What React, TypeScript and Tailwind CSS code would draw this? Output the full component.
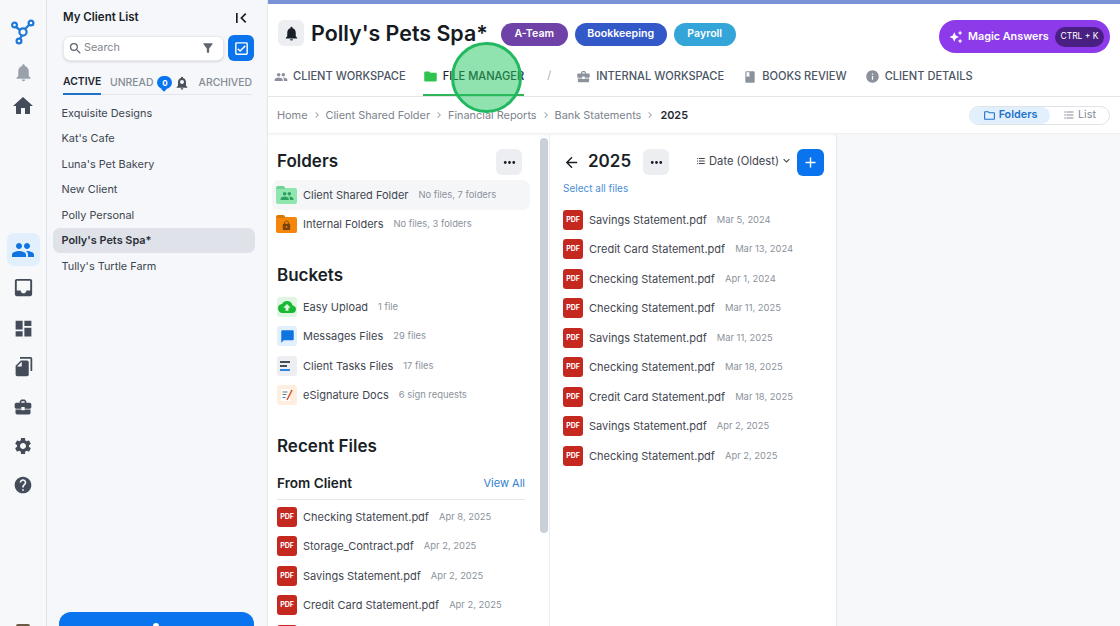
import React from 'react'
import {
  MdPeople,
  MdInbox,
  MdDashboard,
  MdFileCopy,
  MdBusinessCenter,
  MdSettings,
  MdHelp,
  MdHome,
  MdNotifications,
  MdFolder,
  MdBook,
  MdInfo,
  MdCloudUpload,
  MdLock,
  MdChatBubble,
  MdMoreHoriz,
  MdArrowBack,
  MdAdd,
  MdOutlineCheckBox,
  MdOutlineFolder,
  MdFormatListBulleted,
  MdAutoAwesome,
  MdKeyboardArrowDown,
  MdChevronRight,
  MdSearch,
  MdFilterAlt,
  MdFirstPage,
} from 'react-icons/md'

const clients = ['Exquisite Designs', "Kat's Cafe", "Luna's Pet Bakery", 'New Client', 'Polly Personal', "Polly's Pets Spa*", "Tully's Turtle Farm"]

const crumbs = ['Home', 'Client Shared Folder', 'Financial Reports', 'Bank Statements']

const recentFiles = [
  { name: 'Checking Statement.pdf', date: 'Apr 8, 2025' },
  { name: 'Storage_Contract.pdf', date: 'Apr 2, 2025' },
  { name: 'Savings Statement.pdf', date: 'Apr 2, 2025' },
  { name: 'Credit Card Statement.pdf', date: 'Apr 2, 2025' },
]

const folderFiles = [
  { name: 'Savings Statement.pdf', date: 'Mar 5, 2024' },
  { name: 'Credit Card Statement.pdf', date: 'Mar 13, 2024' },
  { name: 'Checking Statement.pdf', date: 'Apr 1, 2024' },
  { name: 'Checking Statement.pdf', date: 'Mar 11, 2025' },
  { name: 'Savings Statement.pdf', date: 'Mar 11, 2025' },
  { name: 'Checking Statement.pdf', date: 'Mar 18, 2025' },
  { name: 'Credit Card Statement.pdf', date: 'Mar 18, 2025' },
  { name: 'Savings Statement.pdf', date: 'Apr 2, 2025' },
  { name: 'Checking Statement.pdf', date: 'Apr 2, 2025' },
]

const Row = ({ icon, name, meta }: { icon: React.ReactNode; name: string; meta: string }) => (
  <div className="flex h-[29.5px] items-center gap-[6px] whitespace-nowrap">
    {icon}
    <span className="text-[11px] text-[#3f4650]">{name}</span>
    <span className="ml-[4px] text-[9.4px] text-[#8b929b]">{meta}</span>
  </div>
)

const PdfIcon = () => (
  <div className="flex h-[20px] w-[20px] shrink-0 items-center justify-center rounded-[3px] bg-[#c5281f] text-[7px] font-bold text-white">
    PDF
  </div>
)

const FolderIcon = ({ body, tab, children }: { body: string; tab: string; children: React.ReactNode }) => (
  <div className={`relative mt-[2px] flex h-[16px] w-[21px] items-center justify-center rounded-[2px] ${body}`}>
    <div className={`absolute -top-[2px] left-0 h-[3px] w-[9px] rounded-t-[2px] ${tab}`} />
    {children}
  </div>
)

const Tab = ({ icon, label, active }: { icon: React.ReactNode; label: string; active?: boolean }) => (
  <div className={`flex h-[41px] items-center gap-[5px] whitespace-nowrap border-b-2 pt-[4px] text-[11.1px] font-medium ${active ? 'border-[#2fb457] text-[#1f2730]' : 'border-transparent text-[#4b5563]'}`}>
    {icon}
    <span>{label}</span>
  </div>
)

export default function App() {
  return (
    <div className="flex h-[626px] w-[1120px] overflow-hidden bg-white font-['Inter',sans-serif]">
      {/* Icon rail */}
      <div className="relative flex w-[47px] shrink-0 flex-col items-center border-r border-[#dfe3ee] bg-[#f6f8fa]">
        <svg className="mt-[19px]" width="24" height="26" viewBox="0 0 24 26" fill="none" stroke="#1f78d8" strokeWidth="2.2">
          <circle cx="3.5" cy="6" r="2.4" />
          <circle cx="20" cy="4" r="2.4" />
          <circle cx="8" cy="22" r="2.4" />
          <circle cx="12" cy="13" r="3.6" />
          <path d="M5 8l4 3M18 6l-4 4M11 16l-2 4" />
        </svg>
        <MdNotifications className="mt-[17px] text-[#9aa1ab]" size={21} />
        <MdHome className="mt-[11px] text-[#444c59]" size={24} />
        <div className="mt-[115px] flex h-[33px] w-[33px] items-center justify-center rounded-[7px] bg-[#e2f0fd]">
          <MdPeople className="text-[#0f74e0]" size={24} />
        </div>
        <MdInbox className="mt-[10px] text-[#444c59]" size={23} />
        <MdDashboard className="mt-[19px] text-[#444c59]" size={21} />
        <MdFileCopy className="mt-[17px] -scale-x-100 text-[#444c59]" size={21} />
        <MdBusinessCenter className="mt-[20px] text-[#444c59]" size={20} />
        <MdSettings className="mt-[19px] text-[#444c59]" size={20} />
        <MdHelp className="mt-[19px] text-[#444c59]" size={20} />
        <div className="mt-auto h-[2px] w-[14px] rounded-t-full bg-[#6b5a44]" />
      </div>

      {/* Client list */}
      <div className="relative flex w-[221px] shrink-0 flex-col border-r border-[#e6e8ec] bg-[#f5f7fa]">
        <div className="flex items-center justify-between pl-[16px] pr-[20px] pt-[8px]">
          <span className="text-[11.5px] font-semibold text-[#1a1f27]">My Client List</span>
          <MdFirstPage className="translate-x-[4px] text-[#1a1f27]" size={20} />
        </div>
        <div className="mt-[7px] flex items-center gap-[4px] pl-[16px]">
          <div className="flex h-[25px] w-[161px] items-center rounded-[7px] border border-[#e7e9ed] bg-white pl-[4px] pr-[8px] shadow-sm">
            <MdSearch className="text-[#5f6670]" size={15} />
            <span className="ml-[1px] flex-1 pt-[1px] text-[10.8px] text-[#7f868f]">Search</span>
            <MdFilterAlt className="text-[#5f6670]" size={14} />
          </div>
          <div className="flex h-[26px] w-[26px] items-center justify-center rounded-[6px] bg-[#0a74ee]">
            <MdOutlineCheckBox className="text-white" size={17} />
          </div>
        </div>
        <div className="ml-[16px] mr-[15px] mt-[10px] flex h-[24px] items-center border-b border-[#e3e6ea] text-[10.4px] font-medium text-[#858c96]">
          <span className="-mb-[1px] flex h-[24px] w-[38px] items-center border-b-2 border-[#1f72c9] font-semibold text-[#1f2730]">ACTIVE</span>
          <span className="ml-[9px]">UNREAD</span>
          <span className="relative ml-[4px] flex h-[13px] w-[15px] items-center justify-center rounded-full bg-[#0a74ee] text-[8px] font-bold text-white">
            0
            <span className="absolute -bottom-[2px] left-[5px] h-[4px] w-[4px] rotate-45 bg-[#0a74ee]" />
          </span>
          <span className="relative ml-[2px] flex">
            <MdNotifications className="text-[#4a505a]" size={16} />
            <span className="absolute left-[6px] top-[5px] h-[4px] w-[4px] rounded-full bg-[#f5f7fa]" />
          </span>
          <span className="ml-auto">ARCHIVED</span>
        </div>
        <div className="mt-[5px] flex flex-col pl-[6px] pr-[12px]">
          {clients.map((c) => (
            <div
              key={c}
              className={`flex h-[25.5px] items-center rounded-[7px] pl-[8.5px] text-[10.9px] ${c === "Polly's Pets Spa*" ? 'bg-[#dfe2e8] font-semibold text-[#2a3039]' : 'text-[#3f4650]'}`}
            >
              {c}
            </div>
          ))}
        </div>
        <div className="ml-[12px] mr-[13px] mt-auto h-[14px] rounded-t-[12px] bg-[#0a74ee]">
          <div className="mx-auto h-[3px] w-[6px] translate-x-[-1px] translate-y-[11px] rounded-t-full bg-white" />
        </div>
      </div>

      {/* Main */}
      <div className="relative flex min-w-0 flex-1 flex-col">
        <div className="h-[4px] bg-[#7b93d6]" />
        <div className="flex items-start px-[10px] pt-[16px]">
          <div className="flex h-[26px] w-[26px] items-center justify-center rounded-[6px] bg-[#eceef1]">
            <MdNotifications className="text-[#1a1f27]" size={17} />
          </div>
          <span className="ml-[7px] whitespace-nowrap text-[21.4px] font-semibold leading-[27px] text-[#151a22]">Polly's Pets Spa*</span>
          <div className="ml-[13px] mt-[2px] flex h-[24px] items-center gap-[7px] text-[10.6px] font-semibold text-white">
            <span className="flex h-[23px] w-[67px] items-center justify-center rounded-full bg-[#6f42a8]">A-Team</span>
            <span className="flex h-[23px] w-[92px] items-center justify-center rounded-full bg-[#3359c9]">Bookkeeping</span>
            <span className="flex h-[23px] w-[62px] items-center justify-center rounded-full bg-[#34a5d9]">Payroll</span>
          </div>
          <div className="ml-auto flex h-[33px] w-[171px] items-center rounded-full bg-[#8d3bea] pl-[10px] pr-[6px] text-white">
            <MdAutoAwesome size={14} />
            <span className="ml-[5px] whitespace-nowrap pt-[1px] text-[10.8px] font-semibold">Magic Answers</span>
            <span className="ml-auto flex h-[20px] w-[49px] items-center justify-center rounded-full bg-[#4a1f82] text-[8.5px]">CTRL + K</span>
          </div>
        </div>
        <div className="mt-[3px] flex h-[41px] items-end border-b border-[#e5e7eb] pl-[6px]">
          <div className="flex items-center">
            <Tab icon={<MdPeople className="text-[#8b929c]" size={14} />} label="CLIENT WORKSPACE" />
            <div className="ml-[17px]">
              <Tab active icon={<MdFolder className="text-[#2fc34f]" size={15} />} label="FILE MANAGER" />
            </div>
            <span className="ml-[23px] text-[11px] text-[#a9aeb6]">/</span>
            <div className="ml-[25px]">
              <Tab icon={<MdBusinessCenter className="text-[#8b929c]" size={15} />} label="INTERNAL WORKSPACE" />
            </div>
            <div className="ml-[19px]">
              <Tab icon={<MdBook className="text-[#8b929c]" size={14} />} label="BOOKS REVIEW" />
            </div>
            <div className="ml-[18px]">
              <Tab icon={<MdInfo className="text-[#8b929c]" size={15} />} label="CLIENT DETAILS" />
            </div>
          </div>
        </div>
        <div className="flex h-[37px] shrink-0 items-center border-b border-[#eef0f3] pl-[9px] pr-[10px] shadow-[0_1px_3px_rgba(0,0,0,0.05)]">
          {crumbs.map((c) => (
            <React.Fragment key={c}>
              <span className="whitespace-nowrap pt-[1px] text-[10.9px] text-[#7d848e]">{c}</span>
              <MdChevronRight className="mx-[3px] text-[#a3a9b1]" size={12} />
            </React.Fragment>
          ))}
          <span className="ml-[1px] pt-[1px] text-[10.9px] font-semibold text-[#1f2730]">2025</span>
          <div className="ml-auto flex h-[19px] w-[141px] items-center rounded-full border border-[#dfe3e8] text-[10.8px]">
            <span className="flex h-full w-[80px] items-center justify-center gap-[3px] rounded-full bg-[#e2f0fd] font-semibold text-[#1f72c9]">
              <MdOutlineFolder size={13} />
              Folders
            </span>
            <span className="flex flex-1 items-center justify-center gap-[3px] text-[#858c96]">
              <MdFormatListBulleted size={12} />
              List
            </span>
          </div>
        </div>

        <div className="flex min-h-0 flex-1">
          {/* Folders and buckets column */}
          <div className="relative w-[282px] shrink-0 overflow-hidden border-r border-[#eceef1] pl-[9px] pr-[24px] pt-[15px]">
            <div className="flex h-[26px] items-center justify-between">
              <span className="text-[17px] font-semibold text-[#1a1f27]">Folders</span>
              <div className="flex h-[26px] w-[26px] -translate-x-[3px] items-center justify-center rounded-[6px] bg-[#eceef1]">
                <MdMoreHoriz className="text-[#1a1f27]" size={17} />
              </div>
            </div>
            <div className="-mx-[5px] mt-[5px] rounded-[7px] bg-[#f5f6f8] px-[4px]">
              <Row
                name="Client Shared Folder"
                meta="No files, 7 folders"
                icon={
                  <FolderIcon body="bg-[#8fe6ae]" tab="bg-[#6fd493]">
                    <MdPeople className="text-[#2e9e63]" size={14} />
                  </FolderIcon>
                }
              />
            </div>
            <div className="-mx-[1px]">
              <Row
                name="Internal Folders"
                meta="No files, 3 folders"
                icon={
                  <FolderIcon body="bg-[#f5860b]" tab="bg-[#d97706]">
                    <MdLock className="text-[#7a430a]" size={11} />
                  </FolderIcon>
                }
              />
            </div>
            <div className="mt-[23px] text-[17px] font-semibold leading-[26px] text-[#1a1f27]">Buckets</div>
            <div className="mt-[4px]">
              <Row
                name="Easy Upload"
                meta="1 file"
                icon={
                  <div className="flex h-[20px] w-[20px] items-center justify-center rounded-[3px] bg-[#dff7e2]">
                    <MdCloudUpload className="text-[#19b934]" size={18} />
                  </div>
                }
              />
              <Row
                name="Messages Files"
                meta="29 files"
                icon={
                  <div className="flex h-[20px] w-[20px] items-center justify-center rounded-[3px] bg-[#e2f0fd]">
                    <MdChatBubble className="text-[#0f74e0]" size={15} />
                  </div>
                }
              />
              <Row
                name="Client Tasks Files"
                meta="17 files"
                icon={
                  <div className="flex h-[20px] w-[20px] flex-col justify-center gap-[2px] rounded-[3px] bg-[#eceef1] pl-[3px]">
                    <div className="h-[2px] w-[10px] bg-[#444c59]" />
                    <div className="h-[2px] w-[7px] bg-[#444c59]" />
                    <div className="h-[2px] w-[10px] bg-[#2a86e0]" />
                  </div>
                }
              />
              <Row
                name="eSignature Docs"
                meta="6 sign requests"
                icon={
                  <div className="flex h-[20px] w-[20px] items-center justify-center rounded-[3px] bg-[#fdeee0]">
                    <svg width="14" height="14" viewBox="0 0 14 14" fill="none">
                      <rect x="1" y="1" width="9" height="12" fill="#fff" />
                      <path d="M2.5 4h5M2.5 6.5h4" stroke="#6b7280" />
                      <path d="M2.5 9.5h3" stroke="#2a86e0" />
                      <path d="M12 2L7 12" stroke="#d9552b" strokeWidth="1.6" />
                    </svg>
                  </div>
                }
              />
            </div>
            <div className="mt-[23px] text-[17px] font-semibold leading-[26px] text-[#1a1f27]">Recent Files</div>
            <div className="mt-[14px] flex h-[27px] items-start justify-between border-b border-[#e5e7eb]">
              <span className="text-[13.6px] font-semibold text-[#1a1f27]">From Client</span>
              <span className="pt-[2px] text-[11px] text-[#2f7fcf]">View All</span>
            </div>
            <div className="mt-[2px]">
              {recentFiles.map((f, i) => (
                <Row key={i} icon={<PdfIcon />} name={f.name} meta={f.date} />
              ))}
              {/* only the top of the next row's icon shows above the fold */}
              <div className="flex h-[29.5px] items-center">
                <div className="h-[20px] w-[20px] rounded-[3px] bg-[#c5281f]" />
              </div>
            </div>
            {/* scrollbar */}
            <div className="absolute left-[272px] top-[4px] h-[395px] w-[8px] rounded-full bg-[#c9d0d8]" />
          </div>

          {/* Open folder column */}
          <div className="w-[287px] shrink-0 border-r border-[#e5e7eb] pl-[13px] pr-[12px] pt-[15px]">
            <div className="flex h-[26px] items-center">
              <MdArrowBack className="text-[#1a1f27]" size={17} />
              <span className="ml-[8px] text-[17px] font-semibold text-[#1a1f27]">2025</span>
              <div className="ml-[12px] flex h-[26px] w-[26px] items-center justify-center rounded-[6px] bg-[#eceef1]">
                <MdMoreHoriz className="text-[#1a1f27]" size={17} />
              </div>
              <div className="ml-auto flex -translate-y-[1px] items-center gap-[3px] text-[11.2px] text-[#3f4650]">
                <MdFormatListBulleted size={10} />
                <span>Date (Oldest)</span>
                <MdKeyboardArrowDown className="-ml-[2px]" size={13} />
              </div>
              <div className="ml-[4px] flex h-[27px] w-[27px] items-center justify-center rounded-[6px] bg-[#0a74ee]">
                <MdAdd className="text-white" size={17} />
              </div>
            </div>
            <div className="mt-[6px] text-[10px] text-[#4a8fd6]">Select all files</div>
            <div className="mt-[9px]">
              {folderFiles.map((f, i) => (
                <Row key={i} icon={<PdfIcon />} name={f.name} meta={f.date} />
              ))}
            </div>
          </div>

          <div className="flex-1 bg-[#f7f8fa]" />
        </div>

        {/* click highlight */}
        <div className="absolute left-[183px] top-[42px] h-[71px] w-[71px] rounded-full border-[3px] border-[#22b85f] bg-[rgba(34,197,94,0.5)]" />
      </div>
    </div>
  )
}
